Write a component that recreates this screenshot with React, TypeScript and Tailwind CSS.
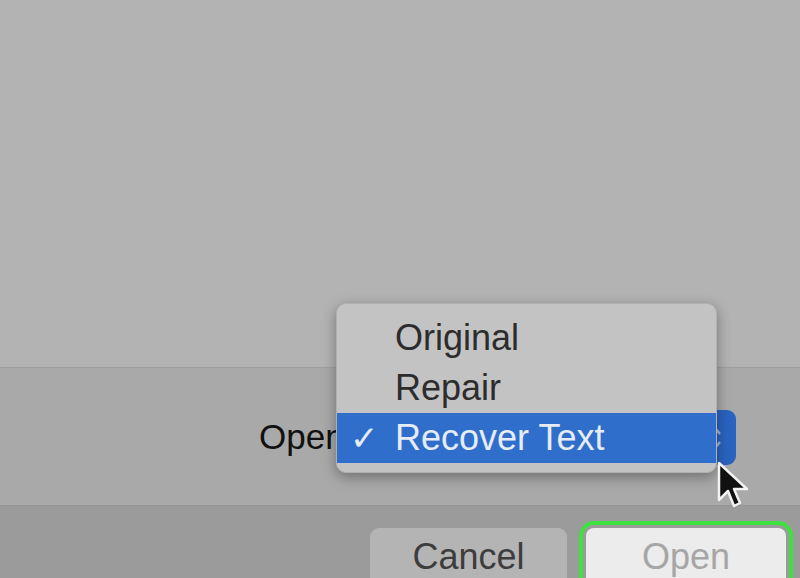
import React from "react";

function Cursor() {
  return (
    <svg width="36" height="52" viewBox="0 0 36 52" className="absolute left-[716px] top-[460px]">
      <path
        d="M3 3 L3 40 L12 31 L18 46 L24 43 L18 29 L31 29 Z"
        fill="#111"
        stroke="#f2f2f2"
        strokeWidth="2.5"
        strokeLinejoin="round"
      />
    </svg>
  );
}

export default function App() {
  return (
    <div
      className="relative w-[800px] h-[578px] overflow-hidden flex flex-col bg-[#b2b2b2]"
      style={{ fontFamily: '"Liberation Sans", Arial, sans-serif' }}
    >
      {/* top empty panel */}
      <div className="h-[367px] shrink-0 bg-[#b3b3b3]" />
      <div className="h-px shrink-0 bg-[#9e9e9e]" />

      {/* options band */}
      <div className="h-[137px] shrink-0 bg-[#a9a9a9] flex items-start pt-[42px] pl-[259px]">
        <div className="w-[78px] h-[55px] overflow-hidden flex items-center text-[35px] text-[#111] whitespace-nowrap">
          Open as:
        </div>
        <div className="ml-[7px] relative w-[392px] h-[55px] rounded-[9px] bg-[#2b63c0] flex items-center justify-end pr-[14px]">
          <svg width="14" height="30" viewBox="0 0 14 30">
            <path d="M2 11 L7 5 L12 11" fill="none" stroke="#9fb7de" strokeWidth="2.5" />
            <path d="M2 19 L7 25 L12 19" fill="none" stroke="#9fb7de" strokeWidth="2.5" />
          </svg>

          {/* popup menu */}
          <div className="absolute left-[-8px] top-[-107px] w-[381px] h-[170px] rounded-[10px] bg-[#c3c3c3] shadow-[0_4px_14px_rgba(0,0,0,0.35)] border border-[#b0b0b0] py-[9px] flex flex-col">
            <div className="h-[50px] flex items-center pl-[58px] text-[36px] text-[#2c2c2c]">Original</div>
            <div className="h-[50px] flex items-center pl-[58px] text-[36px] text-[#2c2c2c]">Repair</div>
            <div className="h-[50px] flex items-center bg-[#2f6fcb] text-[36px] text-[#e6ecf5]">
              <span className="w-[58px] pl-[13px] text-[34px]">✓</span>
              <span>Recover Text</span>
            </div>
          </div>
        </div>
      </div>

      {/* buttons band */}
      <div className="h-[73px] shrink-0 bg-[#9b9b9b] border-t border-[#959595] flex items-start pt-[22px] pl-[370px]">
        <div className="w-[197px] h-[58px] shrink-0 rounded-[9px] bg-[#b4b4b4] flex items-center justify-center text-[36px] text-[#3d3d3d]">
          Cancel
        </div>
        <div className="ml-[19px] w-[200px] h-[58px] shrink-0 rounded-[8px] bg-[#ececec] outline-4 outline-[#3ee23e] outline-offset-[3px] flex items-center justify-center text-[36px] text-[#a6a6a6]">
          Open
        </div>
      </div>

      <Cursor />
    </div>
  );
}
